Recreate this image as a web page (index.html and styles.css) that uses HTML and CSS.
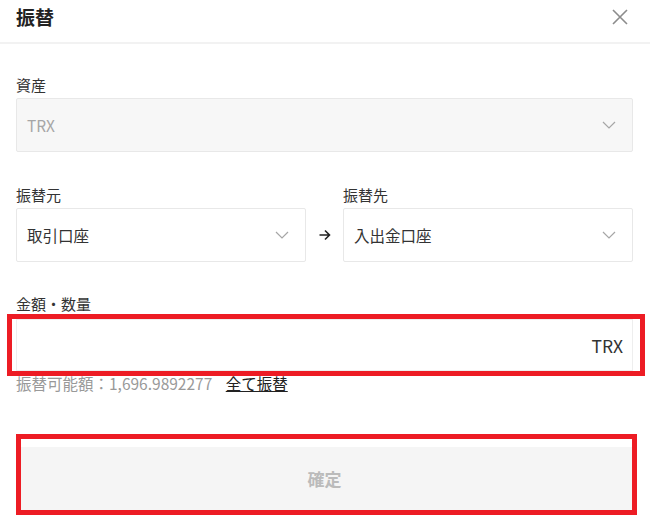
FILE: index.html
```html
<!DOCTYPE html>
<html lang="ja">
<head>
  <meta charset="UTF-8">
  <title>振替</title>
  <link rel="stylesheet" href="styles.css">
</head>
<body>
  <div class="header">
    <h1 class="title">振替</h1>
    <svg class="close" width="18" height="18" viewBox="0 0 18 18">
      <path d="M2 2L16 16M16 2L2 16" stroke="#8c8c8c" stroke-width="1.6" fill="none"/>
    </svg>
  </div>

  <div class="form">
    <div class="label">資産</div>
    <div class="select disabled">
      <span>TRX</span>
      <svg class="chevron" width="14" height="8" viewBox="0 0 14 8"><path d="M1 1L7 7L13 1" stroke="#a6a6a6" stroke-width="1.2" fill="none"/></svg>
    </div>

    <div class="row">
      <div class="col">
        <div class="label">振替元</div>
        <div class="select">
          <span>取引口座</span>
          <svg class="chevron" width="14" height="8" viewBox="0 0 14 8"><path d="M1 1L7 7L13 1" stroke="#a6a6a6" stroke-width="1.2" fill="none"/></svg>
        </div>
      </div>
      <div class="arrow">
        <svg width="12" height="12" viewBox="0 0 12 12"><path d="M0.5 6H10.5M6 1.5L10.5 6L6 10.5" stroke="#222" stroke-width="1.6" fill="none"/></svg>
      </div>
      <div class="col">
        <div class="label">振替先</div>
        <div class="select">
          <span>入出金口座</span>
          <svg class="chevron" width="14" height="8" viewBox="0 0 14 8"><path d="M1 1L7 7L13 1" stroke="#a6a6a6" stroke-width="1.2" fill="none"/></svg>
        </div>
      </div>
    </div>

    <div class="label amount-label">金額・数量</div>
    <div class="amount">
      <div class="input">
        <span class="unit">TRX</span>
      </div>
      <span class="mark mark-input"></span>
    </div>
    <div class="available">
      <span>振替可能額：1,696.9892277</span>
      <a class="all" href="#">全て振替</a>
    </div>

    <div class="submit">
      <button class="button">確定</button>
      <span class="mark mark-button"></span>
    </div>
  </div>
</body>
</html>
```

FILE: styles.css
```css
body {
  margin: 0;
  font-family: "Noto Sans CJK JP", "Noto Sans", sans-serif;
  color: #333;
  background: #fff;
  overflow: hidden;
}

.header {
  display: flex;
  justify-content: space-between;
  align-items: center;
  height: 32px;
  padding: 1px 21px 9px 16px;
  border-bottom: 2px solid #f2f2f2;
}

.title {
  margin: 0;
  font-size: 19px;
  font-weight: 700;
  color: #222;
  line-height: 30px;
}

.form {
  padding: 30px 17px 0 16px;
}

.label {
  font-size: 15px;
  line-height: 21px;
  color: #333;
  margin-bottom: 3px;
}

.select {
  display: flex;
  align-items: center;
  justify-content: space-between;
  height: 54px;
  box-sizing: border-box;
  padding: 0 16px 0 10px;
  border: 1px solid #e8e8e8;
  border-radius: 2px;
  font-size: 15.5px;
  color: #333;
  background: #fff;
}

.select.disabled {
  background: #f7f7f7;
  color: #a6a6a6;
}

.row {
  display: flex;
  align-items: flex-end;
  margin-top: 32px;
}

.col {
  flex: 1;
}

.arrow {
  width: 37px;
  height: 54px;
  display: flex;
  align-items: center;
  justify-content: center;
}

.amount-label {
  margin-top: 31px;
  margin-bottom: 5px;
}

.amount {
  position: relative;
}

.input {
  height: 52px;
  box-sizing: border-box;
  border: 1px solid #eee;
  display: flex;
  align-items: center;
  justify-content: flex-end;
  padding: 0 9px;
  font-size: 17.5px;
  color: #333;
}

.mark {
  position: absolute;
  border: 5px solid #ed1c24;
  pointer-events: none;
}

.mark-input {
  top: -5px;
  left: -9px;
  right: -12px;
  bottom: -5px;
}

.available {
  margin-top: 2px;
  font-size: 15.5px;
  line-height: 21px;
  color: #999;
}

.all {
  margin-left: 10px;
  color: #222;
  text-decoration: underline;
}

.submit {
  position: relative;
  margin-top: 53px;
}

.button {
  display: block;
  width: 100%;
  height: 68px;
  border: none;
  background: #f5f5f5;
  color: #bbb;
  font-family: inherit;
  font-size: 17px;
  font-weight: 700;
  padding: 0 0 6px;
}

.mark-button {
  top: -13px;
  left: 0;
  right: -4px;
  bottom: 0;
}
```
